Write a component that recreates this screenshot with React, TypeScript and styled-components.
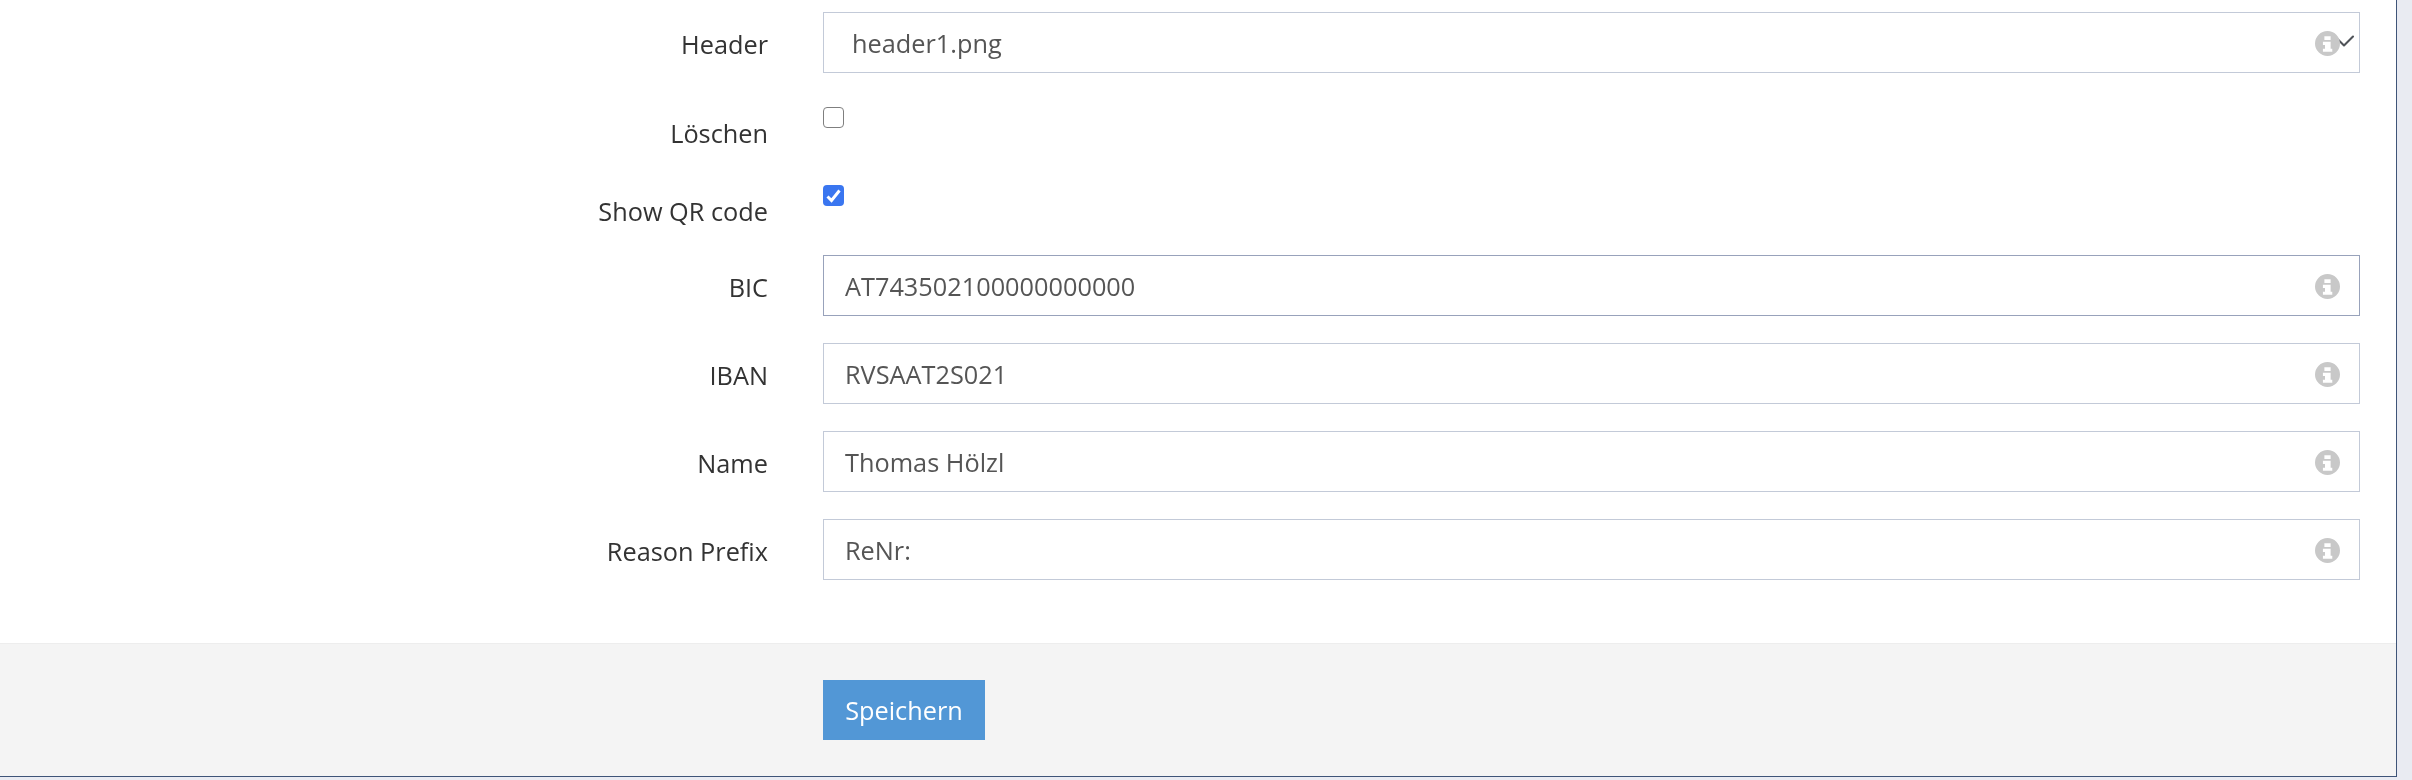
import React from "react";
import styled, { createGlobalStyle } from "styled-components";

const Global = createGlobalStyle`
  html, body { margin: 0; padding: 0; background: #e9ebf2; }
  body { font-family: "Open Sans", "Noto Sans", sans-serif; }
  #root { height: 780px; overflow: hidden; }
`;

const Panel = styled.div`
  width: 2396px;
  height: 776px;
  box-sizing: content-box;
  background: #fff;
  border-right: 1px solid #3e5478;
  border-bottom: 1px solid #3e5478;
  display: flex;
  flex-direction: column;
  will-change: transform;
`;

const Form = styled.div`
  flex: 1;
  padding: 12px 36px 0 0;
  display: flex;
  flex-direction: column;
`;

const Row = styled.div<{ $height: number }>`
  display: grid;
  grid-template-columns: 768px 1fr;
  column-gap: 55px;
  height: ${(p) => p.$height}px;
`;

const Label = styled.label<{ $top: number }>`
  padding-top: ${(p) => p.$top}px;
  text-align: right;
  font-size: 25.3px;
  line-height: 34px;
  color: #333;
`;

const Field = styled.div<{ $focus?: boolean; $inset?: number }>`
  position: relative;
  height: 61px;
  box-sizing: border-box;
  border: 1.5px solid ${(p) => (p.$focus ? "#98a2bb" : "#c3cad8")};
  padding-left: ${(p) => p.$inset ?? 21}px;
  display: flex;
  align-items: center;
  font-size: 25.3px;
  color: #555;
  background: #fff;
`;

const Chevron = styled.svg`
  position: absolute;
  right: 3px;
  top: 16px;
  width: 24px;
  height: 24px;
  fill: none;
  stroke: #4f5358;
  stroke-width: 1.4;
  stroke-linecap: round;
  stroke-linejoin: round;
`;

const InfoIcon = styled.svg`
  position: absolute;
  right: 19px;
  top: 17.5px;
  width: 25px;
  height: 25px;
  fill: #c8c8c8;
`;

const Info = () => (
  <InfoIcon viewBox="0 0 24 24">
    <path
      fillRule="evenodd"
      d="M12 0a12 12 0 1 0 0 24a12 12 0 0 0 0-24zM9 5h6v3.6H9zM7.6 10.4h7.4v6.6h1.6v3H7.6v-3h2v-3.6h-2z"
    />
  </InfoIcon>
);

const CheckBox = styled.span<{ $checked?: boolean }>`
  display: block;
  width: 21px;
  height: 21px;
  box-sizing: border-box;
  border-radius: 4px;
  border: ${(p) => (p.$checked ? "0" : "1.5px solid #7f7f7f")};
  background: ${(p) => (p.$checked ? "#3a76f0" : "#fff")};
`;

const Tick = styled.svg`
  display: block;
  width: 21px;
  height: 21px;
  fill: none;
  stroke: #fff;
  stroke-width: 3;
`;

const Footer = styled.div`
  height: 133px;
  flex: none;
  box-sizing: border-box;
  background: #f4f4f4;
  border-top: 1px solid #ededed;
  padding: 36px 0 0 823px;
`;

const Save = styled.button`
  display: block;
  width: 162px;
  height: 60px;
  padding: 0;
  border: 0;
  background: #5297d6;
  color: #fff;
  font-family: inherit;
  font-size: 25.3px;
`;

const textRows = [
  { label: "BIC", value: "AT743502100000000000", focus: true },
  { label: "IBAN", value: "RVSAAT2S021" },
  { label: "Name", value: "Thomas Hölzl" },
  { label: "Reason Prefix", value: "ReNr:" },
];

export default function App() {
  return (
    <>
      <Global />
      <Panel>
        <Form>
          <Row $height={95}>
            <Label $top={15}>Header</Label>
            <Field $inset={28}>
              header1.png
              <Chevron viewBox="0 0 16 16">
                <path d="M2 5l6 6 6-6" />
              </Chevron>
              <Info />
            </Field>
          </Row>
          <Row $height={78}>
            <Label $top={9}>Löschen</Label>
            <div>
              <CheckBox role="checkbox" aria-checked="false" />
            </div>
          </Row>
          <Row $height={70}>
            <Label $top={9}>Show QR code</Label>
            <div>
              <CheckBox role="checkbox" aria-checked="true" $checked>
                <Tick viewBox="0 0 21 21">
                  <path d="M4.5 11.5l4 4 8-10" />
                </Tick>
              </CheckBox>
            </div>
          </Row>
          {textRows.map((r) => (
            <Row $height={88} key={r.label}>
              <Label $top={15}>{r.label}</Label>
              <Field $focus={r.focus}>
                {r.value}
                <Info />
              </Field>
            </Row>
          ))}
        </Form>
        <Footer>
          <Save>Speichern</Save>
        </Footer>
      </Panel>
    </>
  );
}
